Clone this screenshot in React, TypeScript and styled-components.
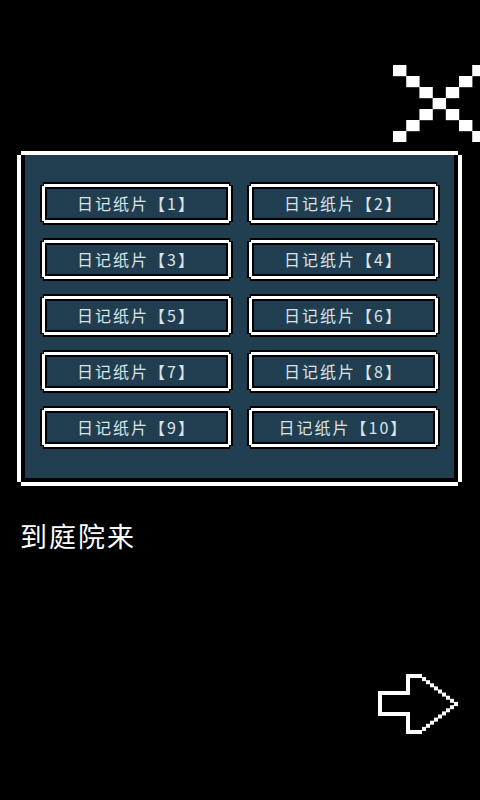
import React from 'react';
import styled, { createGlobalStyle } from 'styled-components';

const GlobalStyle = createGlobalStyle`
  html, body {
    margin: 0;
    padding: 0;
    background: #000;
  }
  body {
    font-family: 'Noto Sans CJK SC', 'Noto Sans', sans-serif;
  }
`;

const notch = (n: number) => `polygon(
  0 ${n}px, ${n}px ${n}px, ${n}px 0,
  calc(100% - ${n}px) 0, calc(100% - ${n}px) ${n}px, 100% ${n}px,
  100% calc(100% - ${n}px), calc(100% - ${n}px) calc(100% - ${n}px), calc(100% - ${n}px) 100%,
  ${n}px 100%, ${n}px calc(100% - ${n}px), 0 calc(100% - ${n}px)
)`;

const Screen = styled.div`
  width: 480px;
  height: 800px;
  background: #000;
  display: flex;
  flex-direction: column;
  overflow: hidden;
`;

const TopBar = styled.div`
  height: 151px;
  display: flex;
  justify-content: flex-end;
  align-items: flex-start;
  padding-top: 65px;
  box-sizing: border-box;
`;

const CloseButton = styled.button`
  background: none;
  border: none;
  padding: 0;
  margin-right: -6px;
  width: 93px;
  height: 77px;
  cursor: pointer;
  display: block;

  svg {
    display: block;
  }
`;

const PanelFrame = styled.div`
  margin: 0 18px 0 17px;
  height: 335px;
  background: #fff;
  padding: 4px;
  box-sizing: border-box;
  clip-path: ${notch(4)};
`;

const PanelBody = styled.div`
  height: 100%;
  box-sizing: border-box;
  background: #213e50;
  border: 4px solid #000;
  border-top: none;
  padding: 27px 14px 25px 15px;
  display: grid;
  grid-template-columns: 193px 193px;
  grid-auto-rows: 43px;
  column-gap: 14px;
  row-gap: 13px;
`;

const Entry = styled.button`
  border: none;
  padding: 2px;
  background: #000;
  clip-path: ${notch(3)};
  cursor: pointer;
  display: block;
`;

const EntryFace = styled.span`
  display: flex;
  align-items: center;
  justify-content: center;
  height: 100%;
  box-sizing: border-box;
  background: #213e50;
  border: 3px solid #fff;
  box-shadow: inset 0 0 0 2px #000;
  clip-path: ${notch(2)};
  color: #d9e3e8;
  font-family: 'Noto Sans CJK SC', 'Noto Sans', sans-serif;
  font-size: 16px;
  letter-spacing: 2px;
  padding-bottom: 1px;
`;

const Caption = styled.p`
  margin: 36px 0 0 0;
  padding-left: 20px;
  color: #fff;
  font-size: 27px;
  line-height: 28px;
  letter-spacing: 2px;
  font-family: 'Noto Sans CJK SC', 'Noto Sans', sans-serif;
`;

const BottomBar = styled.div`
  flex: 1;
  display: flex;
  justify-content: flex-end;
  align-items: flex-end;
  padding: 0 20px 63px 0;
`;

const NextButton = styled.button`
  background: none;
  border: none;
  padding: 0;
  cursor: pointer;

  svg {
    display: block;
  }
`;

const CloseIcon = () => {
  const cells: [number, number][] = [
    [0, 0], [1, 1], [2, 2], [3, 3], [4, 2], [5, 1], [6, 0],
    [2, 4], [1, 5], [0, 6], [4, 4], [5, 5], [6, 6],
  ];
  return (
    <svg width="93" height="77" viewBox="0 0 93 77">
      {cells.map(([c, r]) => (
        <rect key={`${c}-${r}`} x={c * 13.2} y={r * 11} width="13.4" height="11.2" fill="#fff" />
      ))}
    </svg>
  );
};

const ArrowIcon = () => {
  const dots = Array.from({ length: 10 }, (_, i) => i);
  return (
    <svg width="82" height="64" viewBox="0 0 82 64">
      <g fill="#fff">
        <rect x="0" y="18" width="4" height="25" />
        <rect x="0" y="18" width="32" height="4" />
        <rect x="0" y="39" width="32" height="4" />
        <rect x="28" y="1" width="4" height="21" />
        <rect x="28" y="39" width="4" height="22" />
        <rect x="28" y="1" width="12" height="4" />
        <rect x="28" y="57" width="12" height="4" />
        {dots.map(i => (
          <rect key={`t${i}`} x={40 + i * 4} y={1 + i * 3.1} width="4" height="4" />
        ))}
        {dots.map(i => (
          <rect key={`b${i}`} x={40 + i * 4} y={57 - i * 3.1} width="4" height="4" />
        ))}
      </g>
    </svg>
  );
};

const entries = Array.from({ length: 10 }, (_, i) => `日记纸片【${i + 1}】`);

export default function App() {
  return (
    <>
      <GlobalStyle />
      <Screen>
        <TopBar>
          <CloseButton aria-label="close">
            <CloseIcon />
          </CloseButton>
        </TopBar>
        <PanelFrame>
          <PanelBody>
            {entries.map(label => (
              <Entry key={label}>
                <EntryFace>{label}</EntryFace>
              </Entry>
            ))}
          </PanelBody>
        </PanelFrame>
        <Caption>到庭院来</Caption>
        <BottomBar>
          <NextButton aria-label="next">
            <ArrowIcon />
          </NextButton>
        </BottomBar>
      </Screen>
    </>
  );
}
